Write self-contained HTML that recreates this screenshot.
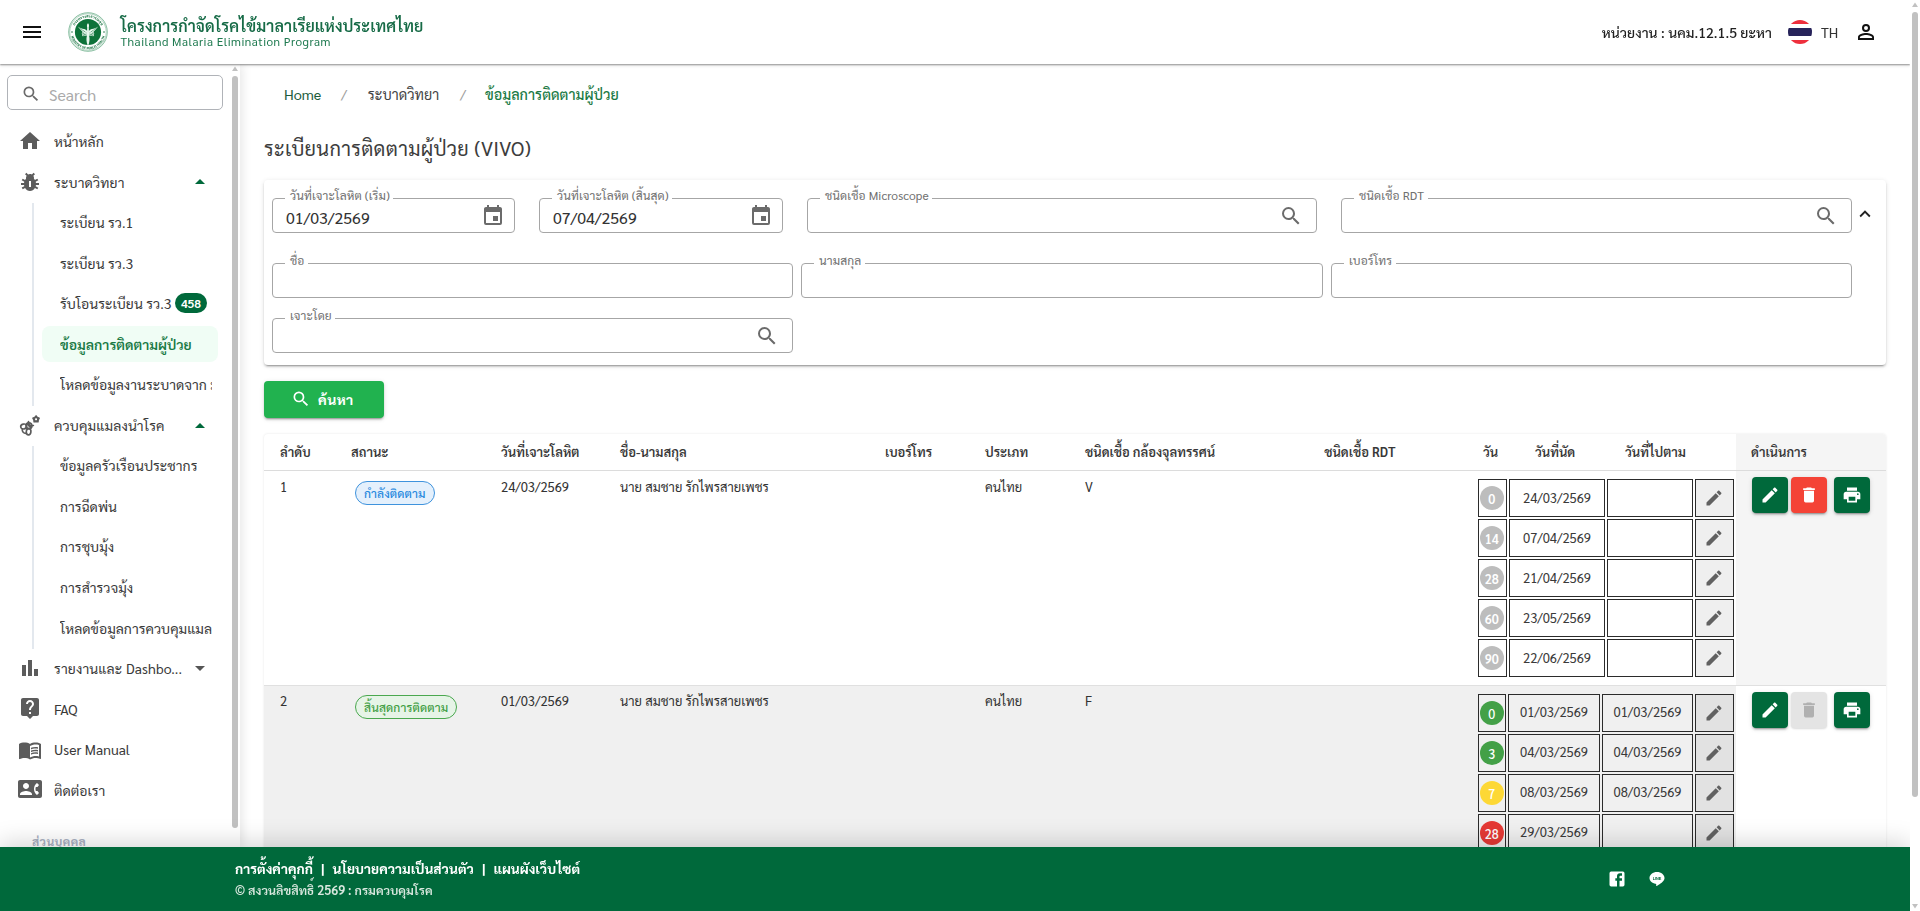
<!DOCTYPE html>
<html lang="th">
<head>
<meta charset="utf-8">
<title>ระเบียนการติดตามผู้ป่วย (VIVO)</title>
<style>
*{box-sizing:border-box;}
html,body{margin:0;padding:0;}
body{width:1920px;height:911px;overflow:hidden;background:#fff;position:relative;
  font-family:"Sarabun","Liberation Sans","Noto Sans Thai","Loma",sans-serif;font-size:14px;color:#333;
  -webkit-font-smoothing:antialiased;}
svg{display:block;}
.abs{position:absolute;}

/* ---------- app bar ---------- */
#appbar{position:absolute;left:0;top:0;width:1910px;height:64px;background:#fff;z-index:30;will-change:transform;
  box-shadow:0 1px 1.5px rgba(0,0,0,.36),0 2px 3px rgba(0,0,0,.10);}
#appbar .burger{position:absolute;left:20px;top:20px;width:24px;height:24px;}
#appbar .logo{position:absolute;left:68px;top:12px;width:40px;height:40px;}
#appbar .t1{position:absolute;left:120.5px;top:13.5px;font-size:16px;letter-spacing:.1px;font-weight:600;color:#176b47;line-height:24px;white-space:nowrap;}
#appbar .t2{position:absolute;left:120.5px;top:32px;font-size:11.8px;letter-spacing:.47px;color:#1f7a50;line-height:18px;white-space:nowrap;}
#appbar .unit{position:absolute;right:138px;top:21px;letter-spacing:.04px;font-size:14px;font-weight:500;color:#222;line-height:22px;white-space:nowrap;}
#appbar .flag{position:absolute;left:1788px;top:20px;width:24px;height:24px;}
#appbar .lang{position:absolute;left:1821px;top:21px;font-size:14px;color:#333;line-height:22px;}
#appbar .user{position:absolute;left:1854px;top:20px;width:24px;height:24px;}

/* ---------- sidebar ---------- */
#side{position:absolute;left:0;top:64px;width:240px;height:783px;background:#fff;z-index:10;overflow:hidden;
  box-shadow:2px 0 10px rgba(0,0,0,.10);}
#side .search{position:absolute;left:7px;top:11px;width:216px;height:35px;border:1px solid #b0b3b8;border-radius:5px;}
#side .search svg{position:absolute;left:13.2px;top:8px;width:20px;height:20px;}
#side .search span{position:absolute;left:41px;top:7px;font-size:16px;color:#aaa;line-height:24px;}
#nav{position:absolute;left:0;top:57px;width:232px;}
.ni{position:relative;height:40.56px;line-height:40.56px;font-size:14px;color:#3a3a3a;white-space:nowrap;}
.ni .ic{position:absolute;left:18px;top:8.3px;width:24px;height:24px;}
.ni .tx{position:absolute;left:54px;top:0;}
.ni.sub .tx{left:60px;max-width:152px;overflow:hidden;}
.ni.grp .tx{letter-spacing:.12px;}
.ni .car{position:absolute;left:188px;top:7.8px;width:24px;height:24px;}
.ni.act .bg{position:absolute;left:42px;top:2.3px;width:176px;height:36px;background:#f0fdf5;border-radius:8px;}
.ni.act .tx{color:#1a7a45;font-weight:600;top:0;}
.badge{display:inline-block;vertical-align:middle;margin-left:4px;margin-top:-5.5px;height:20px;line-height:20.5px;padding:0 5.5px;border-radius:10px;background:#00693b;color:#fff;font-size:12px;font-weight:600;}
.vline{position:absolute;left:32px;width:2px;background:#e3e8ee;}
#side .sect{position:absolute;left:32px;top:768px;font-size:12px;letter-spacing:.4px;font-weight:700;color:#a9b0c2;line-height:18px;}
.sb-thumb{position:absolute;background:#c1c1c1;border-radius:3px;}

/* ---------- main ---------- */
#main{position:absolute;left:240px;top:64px;width:1670px;height:783px;overflow:hidden;background:#fff;}
.crumb{position:absolute;top:18.6px;font-size:14.4px;line-height:22px;white-space:nowrap;}
h1{position:absolute;left:24px;top:69px;margin:0;font-size:20px;letter-spacing:.29px;font-weight:400;color:#3d3d3d;line-height:30px;white-space:nowrap;}
#card{position:absolute;left:24px;top:116px;width:1622px;height:185px;background:#fff;border-radius:4px;
  box-shadow:0 3px 1px -2px rgba(0,0,0,.2),0 2px 2px 0 rgba(0,0,0,.14),0 1px 5px 0 rgba(0,0,0,.12);}
.fld{position:absolute;height:35px;border:1px solid #a6a6a6;border-radius:4px;}
.fld label{position:absolute;left:12px;top:-12.3px;padding:0 3.5px 0 5px;background:#fff;font-size:12px;letter-spacing:.1px;line-height:16px;color:#707070;white-space:nowrap;}
.fld .val{position:absolute;left:13px;top:7px;font-size:16px;line-height:24px;color:#333;}
.fld svg{position:absolute;right:13px;top:5px;width:24px;height:24px;}
#btn{position:absolute;left:24px;top:317px;width:120px;height:37px;letter-spacing:.4px;border-radius:4px;background:#21b24f;color:#fff;font-weight:700;font-size:14px;line-height:36px;
  box-shadow:0 3px 1px -2px rgba(0,0,0,.2),0 2px 2px 0 rgba(0,0,0,.14),0 1px 5px 0 rgba(0,0,0,.12);}
#btn svg{position:absolute;left:27px;top:8px;width:20px;height:20px;}
#btn span{position:absolute;left:54px;top:0;}

/* ---------- table ---------- */
#tbl{position:absolute;left:24px;top:370px;width:1622px;height:420px;border-radius:4px 4px 0 0;box-shadow:0 0 2.5px rgba(0,0,0,.11);}
.th{position:absolute;top:0;height:36px;line-height:36px;font-size:13px;font-weight:600;color:#383838;white-space:nowrap;}
.hline{position:absolute;left:0;width:1622px;height:1px;background:#dcdcdc;}
.td{position:absolute;font-size:13px;line-height:20px;color:#333;white-space:nowrap;}
.chip{position:absolute;height:24px;line-height:22.6px;border-radius:12px;font-size:12px;font-weight:500;letter-spacing:.1px;padding:0 8px;border:1.3px solid;white-space:nowrap;}
.cell{position:absolute;height:38px;border:1px solid #2b2b2b;font-size:13px;line-height:34.4px;text-align:center;color:#3a3a3a;}
.dot{position:absolute;left:.8px;top:6px;width:24px;height:24px;border-radius:50%;color:#fff;font-size:12.5px;font-weight:500;line-height:26px;text-align:center;}
.ab{position:absolute;width:36px;height:36px;border-radius:4px;
  box-shadow:0 3px 1px -2px rgba(0,0,0,.2),0 2px 2px 0 rgba(0,0,0,.14),0 1px 5px 0 rgba(0,0,0,.12);}
.ab svg{position:absolute;left:8px;top:8px;width:20px;height:20px;}

/* ---------- footer ---------- */
#foot{position:absolute;left:0;top:847px;width:1910px;height:64px;background:#00693b;color:#fff;z-index:40;will-change:transform;
  box-shadow:0 -4px 24px rgba(0,0,0,.17);}
#foot .l1 .sp{margin:0 8px;}
#foot .l1{position:absolute;left:235px;top:10px;font-size:13.75px;font-weight:700;line-height:22px;white-space:nowrap;}
#foot .l2{position:absolute;left:235px;top:34px;font-size:12.5px;font-weight:600;line-height:18px;white-space:nowrap;color:#d9e8df;}
</style>
</head>
<body>

<!-- APP BAR -->
<div id="appbar">
  <svg class="burger" viewBox="0 0 24 24"><path fill="#111" d="M3,6H21V8H3V6M3,11H21V13H3V11M3,16H21V18H3V16Z"/></svg>
  <svg class="logo" viewBox="0 0 40 40">
    <defs><path id="arcT" d="M5.5,20 A14.5,14.5 0 0 1 34.5,20"/><path id="arcB" d="M2.7,20 A17.3,17.3 0 0 0 37.3,20"/></defs>
    <circle cx="20" cy="20" r="19.3" fill="#fff" stroke="#3a9463" stroke-width=".6"/>
    <circle cx="20" cy="20" r="18.2" fill="none" stroke="#2a8a55" stroke-width=".35"/>
    <circle cx="20" cy="20" r="13.1" fill="#0d7239"/>
    <text font-size="3.7" font-weight="800" fill="#1b7443" text-anchor="middle" style="font-family:'Sarabun','Liberation Sans',sans-serif"><textPath href="#arcT" startOffset="50%">กระทรวงสาธารณสุข</textPath></text>
    <text font-size="3.3" font-weight="800" fill="#1b7443" text-anchor="middle" letter-spacing="0" style="font-family:'Sarabun','Liberation Sans',sans-serif"><textPath href="#arcB" startOffset="50%">MINISTRY OF PUBLIC HEALTH</textPath></text>
    <circle cx="4" cy="20" r=".8" fill="#1b7443"/><circle cx="36" cy="20" r=".8" fill="#1b7443"/>
    <g fill="#e9f7ee">
      <path d="M20 11.200c1.100 1 1.300 2.600.8 4.100l.3 8.400c.8 2.900.5 6.100-.7 9.600h-.8c-1.200-3.500-1.500-6.700-.7-9.600l.3-8.400c-.5-1.500-.3-3.100.8-4.100z"/>
      <path d="M19.300 21.300L9.700 14.400c2.300 1.500 4.600 2.200 6.300 2.600 1.500.4 2.700 1.200 3.300 2.300z"/>
      <path d="M20.700 21.300l9.600-6.900c-2.300 1.500-4.600 2.200-6.300 2.600-1.500.4-2.700 1.200-3.300 2.300z"/>
      <path d="M9.700 14.400l5.200 5.900c1.300 1.300 3 1.600 4.400 1.400l-.6-1.300c-1.400-.1-2.500-.7-3.300-1.500z"/>
      <path d="M30.300 14.400l-5.200 5.900c-1.300 1.300-3 1.600-4.400 1.400l.6-1.300c1.400-.1 2.500-.7 3.300-1.500z"/>
    </g>
    <path d="M14.800 20.200c-1.300 1.800.3 3.400 2.700 3.100 2.300-.3 3.800-1.500 5.900-1.500 1.700 0 2.600 1.100 1.700 2.400" fill="none" stroke="#e9f7ee" stroke-width="1"/>
    <path d="M25.200 20.200c1.300 1.800-.3 3.400-2.700 3.100-2.300-.3-3.800-1.500-5.900-1.500-1.700 0-2.600 1.100-1.700 2.400" fill="none" stroke="#e9f7ee" stroke-width="1"/>
  </svg>
  <div class="t1">โครงการกำจัดโรคไข้มาลาเรียแห่งประเทศไทย</div>
  <div class="t2">Thailand Malaria Elimination Program</div>
  <div class="unit">หน่วยงาน : นคม.12.1.5 ยะหา</div>
  <svg class="flag" viewBox="0 0 24 24"><defs><clipPath id="fc"><circle cx="12" cy="12" r="12"/></clipPath></defs>
    <g clip-path="url(#fc)"><rect width="24" height="24" fill="#fff"/><rect width="24" height="4" fill="#ee2f3c"/><rect y="20" width="24" height="4" fill="#ee2f3c"/><rect y="8" width="24" height="8" fill="#27235a"/></g></svg>
  <div class="lang">TH</div>
  <svg class="user" viewBox="0 0 24 24"><path fill="#111" d="M12,4A4,4 0 0,1 16,8A4,4 0 0,1 12,12A4,4 0 0,1 8,8A4,4 0 0,1 12,4M12,6A2,2 0 0,0 10,8A2,2 0 0,0 12,10A2,2 0 0,0 14,8A2,2 0 0,0 12,6M12,13C14.67,13 20,14.33 20,17V20H4V17C4,14.33 9.33,13 12,13M12,14.9C9.03,14.9 5.9,16.36 5.9,17V18.1H18.1V17C18.1,16.36 14.97,14.9 12,14.9Z"/></svg>
</div>

<!-- SIDEBAR -->
<div id="side">
  <div class="search">
    <svg viewBox="0 0 24 24"><path fill="#6a6a6a" d="M9.5,3A6.5,6.5 0 0,1 16,9.5C16,11.11 15.41,12.59 14.44,13.73L14.71,14H15.5L20.5,19L19,20.5L14,15.5V14.71L13.73,14.44C12.59,15.41 11.11,16 9.5,16A6.5,6.5 0 0,1 3,9.5A6.5,6.5 0 0,1 9.5,3M9.5,5C7,5 5,7 5,9.5C5,12 7,14 9.5,14C12,14 14,12 14,9.5C14,7 12,5 9.5,5Z"/></svg>
    <span>Search</span>
  </div>
  <div id="nav">
    <div class="ni"><svg class="ic" viewBox="0 0 24 24"><path fill="#5c5c5c" d="M10 20v-6h4v6h5v-8h3L12 3 2 12h3v8z"/></svg><span class="tx">หน้าหลัก</span></div>
    <div class="ni grp"><svg class="ic" viewBox="0 0 24 24"><path fill="#5c5c5c" d="M21 15v-2h-3.070c-.05-.39-.12-.77-.22-1.140l2.580-1.490-1-1.730L16.920 10c-.28-.48-.62-.91-.99-1.290.1-.56.2-1.690-.58-2.890L17 4.180 15.590 2.770l-1.710 1.710c-1.390-.72-2.910-.5-3.760 0L8.410 2.770 7 4.180l1.650 1.650c-.78 1.200-.68 2.340-.58 2.890-.37.38-.71.81-.99 1.290L4.710 8.630l-1 1.730 2.580 1.490c-.1.370-.17.750-.22 1.140H3v2h3.070c.05.39.12.77.22 1.140l-2.580 1.490 1 1.730L7.080 18c1.080 1.810 2.880 3 4.920 3s3.840-1.190 4.920-3l2.370 1.370 1-1.730-2.580-1.490c.1-.37.17-.75.22-1.140H21zm-8 2h-2v-6h2v6z"/></svg><span class="tx">ระบาดวิทยา</span><svg class="car" viewBox="0 0 24 24"><path fill="#00693b" d="M7,15L12,10L17,15H7Z"/></svg></div>
    <div class="ni sub"><span class="tx">ระเบียน รว.1</span></div>
    <div class="ni sub"><span class="tx">ระเบียน รว.3</span></div>
    <div class="ni sub"><span class="tx">รับโอนระเบียน รว.3<span class="badge">458</span></span></div>
    <div class="ni sub act"><div class="bg"></div><span class="tx">ข้อมูลการติดตามผู้ป่วย</span></div>
    <div class="ni sub"><span class="tx">โหลดข้อมูลงานระบาดจาก ม</span></div>
    <div class="ni grp"><svg class="ic" viewBox="0 0 24 24"><path d="M18.05 2.90 L19.37 4.38 L21.19 5.18 L20.19 6.90 L19.99 8.87 L18.05 8.45 L16.11 8.87 L15.91 6.90 L14.91 5.18 L16.73 4.38Z" fill="#5c5c5c" stroke="#5c5c5c" stroke-width="1.5" stroke-linejoin="round"/><rect x="17.10" y="5.30" width="1.9" height="1.9" rx=".4" fill="#fff"/><g transform="translate(0 1.2)" fill="none" stroke="#5c5c5c" stroke-width="1.65" stroke-linecap="round"><circle cx="10.9" cy="11.5" r="2.9"/><path d="M10.500 8.400V7.300M13.900 11.300H15.400M9 9.600L13.100 13.600M9.800 9L13.600 12.700"/><ellipse cx="5.700" cy="12.300" rx="3" ry="2.400" transform="rotate(-12 5.700 12.300)"/><ellipse cx="10.600" cy="17.600" rx="2.300" ry="3.100" transform="rotate(8 10.600 17.600)"/><path d="M4.300 14.700C3.900 17.500 5.600 19.400 8.400 19.200M8.200 13.200L9.300 14.800"/></g></svg><span class="tx">ควบคุมแมลงนำโรค</span><svg class="car" viewBox="0 0 24 24"><path fill="#00693b" d="M7,15L12,10L17,15H7Z"/></svg></div>
    <div class="ni sub"><span class="tx">ข้อมูลครัวเรือนประชากร</span></div>
    <div class="ni sub"><span class="tx">การฉีดพ่น</span></div>
    <div class="ni sub"><span class="tx">การชุบมุ้ง</span></div>
    <div class="ni sub"><span class="tx">การสำรวจมุ้ง</span></div>
    <div class="ni sub"><span class="tx">โหลดข้อมูลการควบคุมแมล</span></div>
    <div class="ni grp"><svg class="ic" viewBox="0 0 24 24"><path fill="#5c5c5c" d="M16 20v-7h4v7zM10 20V4h4v16zM4 20V9h4v11z"/></svg><span class="tx">รายงานและ Dashbo...</span><svg class="car" viewBox="0 0 24 24"><path fill="#555" d="M7,10L12,15L17,10H7Z"/></svg></div>
    <div class="ni"><svg class="ic" style="top:7.3px" viewBox="0 0 24 24"><path fill="#5c5c5c" d="M19 2H5c-1.11 0-2 .9-2 2v14c0 1.1.89 2 2 2h4l3 3 3-3h4c1.1 0 2-.9 2-2V4c0-1.1-.9-2-2-2zm-6 16h-2v-2h2v2zm2.07-7.75l-.9.92C13.45 11.9 13 12.5 13 14h-2v-.5c0-1.1.45-2.1 1.17-2.83l1.24-1.26c.37-.36.59-.86.59-1.41 0-1.1-.9-2-2-2s-2 .9-2 2H8c0-2.21 1.79-4 4-4s4 1.79 4 4c0 .88-.36 1.68-.93 2.25z"/></svg><span class="tx">FAQ</span></div>
    <div class="ni"><svg class="ic" viewBox="0 0 24 24"><path fill="#5c5c5c" d="M21 5c-1.11-.35-2.33-.5-3.5-.5-1.95 0-4.05.4-5.5 1.5-1.45-1.1-3.55-1.500-5.500-1.500S2.450 4.900 1 6v14.650c0 .25.25.5.5.5.1 0 .15-.05.25-.05C3.100 20.450 5.050 20 6.500 20c1.950 0 4.050.4 5.500 1.500 1.350-.85 3.800-1.500 5.500-1.500 1.650 0 3.350.3 4.750 1.050.1.05.15.05.25.05.25 0 .5-.25.5-.5V6c-.6-.45-1.250-.75-2-1zm0 13.500c-1.100-.35-2.300-.5-3.500-.5-1.700 0-4.150.65-5.500 1.500V8c1.350-.85 3.800-1.500 5.500-1.500 1.200 0 2.400.15 3.500.5v11.500z"/><path fill="#5c5c5c" d="M17.500 10.500c.88 0 1.730.09 2.500.26V9.240c-.79-.15-1.640-.24-2.500-.24-1.700 0-3.240.29-4.500.83v1.660c1.130-.64 2.700-.99 4.500-.99zM13 12.490v1.660c1.130-.64 2.700-.99 4.500-.99.88 0 1.730.09 2.500.26V11.900c-.79-.15-1.640-.24-2.500-.24-1.700 0-3.240.3-4.500.83zM17.500 14.330c-1.700 0-3.240.29-4.500.83v1.660c1.130-.64 2.700-.99 4.500-.99.88 0 1.730.09 2.500.26v-1.520c-.79-.16-1.640-.24-2.500-.24z"/></svg><span class="tx">User Manual</span></div>
    <div class="ni"><svg class="ic" style="top:7.3px" viewBox="0 0 24 24"><path fill="#5c5c5c" d="M22 3H2C.9 3 0 3.900 0 5v14c0 1.100.9 2 2 2h20c1.100 0 1.990-.9 1.990-2L24 5c0-1.100-.9-2-2-2zM8 6c1.660 0 3 1.340 3 3s-1.340 3-3 3-3-1.340-3-3 1.340-3 3-3zm6 12H2v-1c0-2 4-3.100 6-3.100s6 1.100 6 3.100v1zm3.850-4h1.640L21 16l-1.990 1.990c-1.310-.98-2.280-2.380-2.730-3.990-.18-.64-.28-1.310-.28-2s.1-1.360.28-2c.45-1.620 1.420-3.010 2.730-3.990L21 8l-1.510 2h-1.640c-.22.63-.35 1.300-.35 2s.13 1.370.35 2z"/></svg><span class="tx">ติดต่อเรา</span></div>
  </div>
  <div class="vline" style="top:139px;height:203px;"></div>
  <div class="vline" style="top:382px;height:203px;"></div>
  <div class="sect">ส่วนบุคคล</div>
  <svg class="abs" style="left:231px;top:1px;width:8px;height:8px;" viewBox="0 0 8 8"><path fill="#c1c1c1" d="M4 1.500L7 6H1z"/></svg>
  <div class="sb-thumb" style="left:232px;top:12px;width:6px;height:752px;"></div>
</div>

<!-- MAIN -->
<div id="main">
  <div class="crumb" style="left:44px;color:#1d5c3c;">Home</div>
  <div class="crumb" style="left:101px;color:#9e9e9e;">/</div>
  <div class="crumb" style="left:127.8px;color:#444;">ระบาดวิทยา</div>
  <div class="crumb" style="left:220px;color:#9e9e9e;">/</div>
  <div class="crumb" style="left:245px;color:#1a7a45;font-weight:500;">ข้อมูลการติดตามผู้ป่วย</div>
  <h1>ระเบียนการติดตามผู้ป่วย (VIVO)</h1>

  <div id="card">
    <div class="fld" style="left:8px;top:18px;width:243px;"><label>วันที่เจาะโลหิต (เริ่ม)</label><span class="val">01/03/2569</span>
      <svg viewBox="0 0 24 24" style="right:9px"><path fill="#6b6b6b" d="M19,19H5V8H19M16,1V3H8V1H6V3H5C3.890,3 3,3.890 3,5V19A2,2 0 0,0 5,21H19A2,2 0 0,0 21,19V5C21,3.890 20.100,3 19,3H18V1M17,12H12V17H17V12Z"/></svg></div>
    <div class="fld" style="left:275px;top:18px;width:244px;"><label>วันที่เจาะโลหิต (สิ้นสุด)</label><span class="val">07/04/2569</span>
      <svg viewBox="0 0 24 24" style="right:9px"><path fill="#6b6b6b" d="M19,19H5V8H19M16,1V3H8V1H6V3H5C3.890,3 3,3.890 3,5V19A2,2 0 0,0 5,21H19A2,2 0 0,0 21,19V5C21,3.890 20.100,3 19,3H18V1M17,12H12V17H17V12Z"/></svg></div>
    <div class="fld" style="left:543px;top:18px;width:510px;"><label>ชนิดเชื้อ Microscope</label>
      <svg viewBox="0 0 24 24"><path fill="#6b6b6b" d="M9.500,3A6.500,6.500 0 0,1 16,9.500C16,11.110 15.410,12.590 14.440,13.730L14.710,14H15.500L20.500,19L19,20.500L14,15.500V14.710L13.730,14.440C12.590,15.410 11.110,16 9.500,16A6.500,6.500 0 0,1 3,9.500A6.500,6.500 0 0,1 9.500,3M9.500,5C7,5 5,7 5,9.500C5,12 7,14 9.500,14C12,14 14,12 14,9.500C14,7 12,5 9.500,5Z"/></svg></div>
    <div class="fld" style="left:1077px;top:18px;width:511px;"><label>ชนิดเชื้อ RDT</label>
      <svg viewBox="0 0 24 24"><path fill="#6b6b6b" d="M9.500,3A6.500,6.500 0 0,1 16,9.500C16,11.110 15.410,12.590 14.440,13.730L14.710,14H15.500L20.500,19L19,20.500L14,15.500V14.710L13.730,14.440C12.590,15.410 11.110,16 9.500,16A6.500,6.500 0 0,1 3,9.500A6.500,6.500 0 0,1 9.500,3M9.500,5C7,5 5,7 5,9.500C5,12 7,14 9.500,14C12,14 14,12 14,9.500C14,7 12,5 9.500,5Z"/></svg></div>
    <svg class="abs" style="left:1590px;top:23px;width:22px;height:22px;" viewBox="0 0 24 24"><path fill="#222" d="M7.410,15.410L12,10.830L16.590,15.410L18,14L12,8L6,14L7.410,15.410Z"/></svg>

    <div class="fld" style="left:8px;top:83px;width:521px;"><label>ชื่อ</label></div>
    <div class="fld" style="left:537px;top:83px;width:522px;"><label>นามสกุล</label></div>
    <div class="fld" style="left:1067px;top:83px;width:521px;"><label>เบอร์โทร</label></div>
    <div class="fld" style="left:8px;top:138px;width:521px;"><label>เจาะโดย</label>
      <svg viewBox="0 0 24 24"><path fill="#6b6b6b" d="M9.500,3A6.500,6.500 0 0,1 16,9.500C16,11.110 15.410,12.590 14.440,13.730L14.710,14H15.500L20.500,19L19,20.500L14,15.500V14.710L13.730,14.440C12.590,15.410 11.110,16 9.500,16A6.500,6.500 0 0,1 3,9.500A6.500,6.500 0 0,1 9.500,3M9.500,5C7,5 5,7 5,9.500C5,12 7,14 9.500,14C12,14 14,12 14,9.500C14,7 12,5 9.500,5Z"/></svg></div>
  </div>

  <div id="btn"><svg viewBox="0 0 24 24"><path fill="#fff" d="M9.500,3A6.500,6.500 0 0,1 16,9.500C16,11.110 15.410,12.590 14.440,13.730L14.710,14H15.500L20.500,19L19,20.500L14,15.500V14.710L13.730,14.440C12.590,15.410 11.110,16 9.500,16A6.500,6.500 0 0,1 3,9.500A6.500,6.500 0 0,1 9.500,3M9.500,5C7,5 5,7 5,9.500C5,12 7,14 9.500,14C12,14 14,12 14,9.500C14,7 12,5 9.500,5Z"/></svg><span>ค้นหา</span></div>

  <div id="tbl">
    <!-- TABLE_CONTENT -->
    <div class="abs" style="left:0;top:252px;width:1622px;height:168px;background:#f0f0f0;"></div>
    <div class="abs" style="left:1472px;top:0;width:150px;height:251px;background:#f5f5f5;border-radius:0 4px 0 0;"></div>
    <div class="abs" style="left:1472px;top:252px;width:150px;height:168px;background:#fff;"></div>
    <div class="th" style="left:16px">ลำดับ</div>
    <div class="th" style="left:87px">สถานะ</div>
    <div class="th" style="left:237px">วันที่เจาะโลหิต</div>
    <div class="th" style="left:356px">ชื่อ-นามสกุล</div>
    <div class="th" style="left:621px">เบอร์โทร</div>
    <div class="th" style="left:721px">ประเภท</div>
    <div class="th" style="left:821px">ชนิดเชื้อ กล้องจุลทรรศน์</div>
    <div class="th" style="left:1060.2px">ชนิดเชื้อ RDT</div>
    <div class="th" style="left:1219px">วัน</div>
    <div class="th" style="left:1271px">วันที่นัด</div>
    <div class="th" style="left:1361px">วันที่ไปตาม</div>
    <div class="th" style="left:1487px">ดำเนินการ</div>
    <div class="hline" style="top:36px"></div>
    <div class="hline" style="top:251px;background:#e0e0e0"></div>
    <div class="td" style="left:16px;top:42.6px">1</div>
    <div class="chip" style="left:91px;top:47px;color:#2688de;border-color:#3f93dd;background:#e4f0fc;">กำลังติดตาม</div>
    <div class="td" style="left:237px;top:42.6px">24/03/2569</div>
    <div class="td" style="left:356px;top:42.6px">นาย สมชาย รักไพรสายเพชร</div>
    <div class="td" style="left:721px;top:42.6px">คนไทย</div>
    <div class="td" style="left:821px;top:42.6px">V</div>
    <div class="td" style="left:16px;top:256.90000000000003px">2</div>
    <div class="chip" style="left:91px;top:261px;color:#3f9e44;border-color:#4aa84f;background:#e6f4e7;">สิ้นสุดการติดตาม</div>
    <div class="td" style="left:237px;top:256.90000000000003px">01/03/2569</div>
    <div class="td" style="left:356px;top:256.90000000000003px">นาย สมชาย รักไพรสายเพชร</div>
    <div class="td" style="left:721px;top:256.90000000000003px">คนไทย</div>
    <div class="td" style="left:821px;top:256.90000000000003px">F</div>
    <div class="cell" style="left:1214px;top:45px;width:29px;background:#fff"><div class="dot" style="background:#bdbdbd;font-weight:600">0</div></div>
    <div class="cell" style="left:1245px;top:45px;width:96px;line-height:36px;background:#fff">24/03/2569</div>
    <div class="cell" style="left:1343px;top:45px;width:86px;line-height:36px;background:#fff"></div>
    <div class="cell" style="left:1431px;top:45px;width:39px;background:#efefef"><svg viewBox="0 0 24 24" style="position:absolute;left:7.7px;top:8px;width:20px;height:20px"><path fill="#616161" d="M20.71,7.04C21.1,6.65 21.1,6 20.71,5.63L18.37,3.29C18,2.9 17.35,2.9 16.96,3.29L15.12,5.12L18.87,8.87M3,17.25V21H6.75L17.81,9.930L14.06,6.180L3,17.25Z"/></svg></div>
    <div class="cell" style="left:1214px;top:85px;width:29px;background:#fff"><div class="dot" style="background:#bdbdbd;font-weight:600">14</div></div>
    <div class="cell" style="left:1245px;top:85px;width:96px;line-height:36px;background:#fff">07/04/2569</div>
    <div class="cell" style="left:1343px;top:85px;width:86px;line-height:36px;background:#fff"></div>
    <div class="cell" style="left:1431px;top:85px;width:39px;background:#efefef"><svg viewBox="0 0 24 24" style="position:absolute;left:7.7px;top:8px;width:20px;height:20px"><path fill="#616161" d="M20.71,7.04C21.1,6.65 21.1,6 20.71,5.63L18.37,3.29C18,2.9 17.35,2.9 16.96,3.29L15.12,5.12L18.87,8.87M3,17.25V21H6.75L17.81,9.930L14.06,6.180L3,17.25Z"/></svg></div>
    <div class="cell" style="left:1214px;top:125px;width:29px;background:#fff"><div class="dot" style="background:#bdbdbd;font-weight:600">28</div></div>
    <div class="cell" style="left:1245px;top:125px;width:96px;line-height:36px;background:#fff">21/04/2569</div>
    <div class="cell" style="left:1343px;top:125px;width:86px;line-height:36px;background:#fff"></div>
    <div class="cell" style="left:1431px;top:125px;width:39px;background:#efefef"><svg viewBox="0 0 24 24" style="position:absolute;left:7.7px;top:8px;width:20px;height:20px"><path fill="#616161" d="M20.71,7.04C21.1,6.65 21.1,6 20.71,5.63L18.37,3.29C18,2.9 17.35,2.9 16.96,3.29L15.12,5.12L18.87,8.87M3,17.25V21H6.75L17.81,9.930L14.06,6.180L3,17.25Z"/></svg></div>
    <div class="cell" style="left:1214px;top:165px;width:29px;background:#fff"><div class="dot" style="background:#bdbdbd;font-weight:600">60</div></div>
    <div class="cell" style="left:1245px;top:165px;width:96px;line-height:36px;background:#fff">23/05/2569</div>
    <div class="cell" style="left:1343px;top:165px;width:86px;line-height:36px;background:#fff"></div>
    <div class="cell" style="left:1431px;top:165px;width:39px;background:#efefef"><svg viewBox="0 0 24 24" style="position:absolute;left:7.7px;top:8px;width:20px;height:20px"><path fill="#616161" d="M20.71,7.04C21.1,6.65 21.1,6 20.71,5.63L18.37,3.29C18,2.9 17.35,2.9 16.96,3.29L15.12,5.12L18.87,8.87M3,17.25V21H6.75L17.81,9.930L14.06,6.180L3,17.25Z"/></svg></div>
    <div class="cell" style="left:1214px;top:205px;width:29px;background:#fff"><div class="dot" style="background:#bdbdbd;font-weight:600">90</div></div>
    <div class="cell" style="left:1245px;top:205px;width:96px;line-height:36px;background:#fff">22/06/2569</div>
    <div class="cell" style="left:1343px;top:205px;width:86px;line-height:36px;background:#fff"></div>
    <div class="cell" style="left:1431px;top:205px;width:39px;background:#efefef"><svg viewBox="0 0 24 24" style="position:absolute;left:7.7px;top:8px;width:20px;height:20px"><path fill="#616161" d="M20.71,7.04C21.1,6.65 21.1,6 20.71,5.63L18.37,3.29C18,2.9 17.35,2.9 16.96,3.29L15.12,5.12L18.87,8.87M3,17.25V21H6.75L17.81,9.930L14.06,6.180L3,17.25Z"/></svg></div>
    <div class="cell" style="left:1214px;top:260px;width:28px;background:transparent"><div class="dot" style="background:#43a047;font-weight:500">0</div></div>
    <div class="cell" style="left:1244px;top:260px;width:92px;line-height:34.4px;background:transparent">01/03/2569</div>
    <div class="cell" style="left:1338px;top:260px;width:91px;line-height:34.4px;background:transparent">01/03/2569</div>
    <div class="cell" style="left:1431px;top:260px;width:39px;background:#e2e2e2"><svg viewBox="0 0 24 24" style="position:absolute;left:7.7px;top:8px;width:20px;height:20px"><path fill="#616161" d="M20.71,7.04C21.1,6.65 21.1,6 20.71,5.63L18.37,3.29C18,2.9 17.35,2.9 16.96,3.29L15.12,5.12L18.87,8.87M3,17.25V21H6.75L17.81,9.930L14.06,6.180L3,17.25Z"/></svg></div>
    <div class="cell" style="left:1214px;top:300px;width:28px;background:transparent"><div class="dot" style="background:#43a047;font-weight:500">3</div></div>
    <div class="cell" style="left:1244px;top:300px;width:92px;line-height:34.4px;background:transparent">04/03/2569</div>
    <div class="cell" style="left:1338px;top:300px;width:91px;line-height:34.4px;background:transparent">04/03/2569</div>
    <div class="cell" style="left:1431px;top:300px;width:39px;background:#e2e2e2"><svg viewBox="0 0 24 24" style="position:absolute;left:7.7px;top:8px;width:20px;height:20px"><path fill="#616161" d="M20.71,7.04C21.1,6.65 21.1,6 20.71,5.63L18.37,3.29C18,2.9 17.35,2.9 16.96,3.29L15.12,5.12L18.87,8.87M3,17.25V21H6.75L17.81,9.930L14.06,6.180L3,17.25Z"/></svg></div>
    <div class="cell" style="left:1214px;top:340px;width:28px;background:transparent"><div class="dot" style="background:#fdd835;font-weight:500">7</div></div>
    <div class="cell" style="left:1244px;top:340px;width:92px;line-height:34.4px;background:transparent">08/03/2569</div>
    <div class="cell" style="left:1338px;top:340px;width:91px;line-height:34.4px;background:transparent">08/03/2569</div>
    <div class="cell" style="left:1431px;top:340px;width:39px;background:#e2e2e2"><svg viewBox="0 0 24 24" style="position:absolute;left:7.7px;top:8px;width:20px;height:20px"><path fill="#616161" d="M20.71,7.04C21.1,6.65 21.1,6 20.71,5.63L18.37,3.29C18,2.9 17.35,2.9 16.96,3.29L15.12,5.12L18.87,8.87M3,17.25V21H6.75L17.81,9.930L14.06,6.180L3,17.25Z"/></svg></div>
    <div class="cell" style="left:1214px;top:380px;width:28px;background:transparent"><div class="dot" style="background:#e53935;font-weight:500">28</div></div>
    <div class="cell" style="left:1244px;top:380px;width:92px;line-height:34.4px;background:transparent">29/03/2569</div>
    <div class="cell" style="left:1338px;top:380px;width:91px;line-height:34.4px;background:transparent"></div>
    <div class="cell" style="left:1431px;top:380px;width:39px;background:#e2e2e2"><svg viewBox="0 0 24 24" style="position:absolute;left:7.7px;top:8px;width:20px;height:20px"><path fill="#616161" d="M20.71,7.04C21.1,6.65 21.1,6 20.71,5.63L18.37,3.29C18,2.9 17.35,2.9 16.96,3.29L15.12,5.12L18.87,8.87M3,17.25V21H6.75L17.81,9.930L14.06,6.180L3,17.25Z"/></svg></div>
    <div class="ab" style="left:1488px;top:43px;background:#00693b"><svg viewBox="0 0 24 24"><path fill="#fff" d="M20.71,7.04C21.1,6.65 21.1,6 20.71,5.63L18.37,3.29C18,2.9 17.35,2.9 16.96,3.29L15.12,5.12L18.87,8.87M3,17.25V21H6.75L17.81,9.930L14.06,6.180L3,17.25Z"/></svg></div>
    <div class="ab" style="left:1527px;top:43px;background:#f44336"><svg viewBox="0 0 24 24"><path fill="#fff" d="M19,4H15.5L14.5,3H9.5L8.5,4H5V6H19M6,19A2,2 0 0,0 8,21H16A2,2 0 0,0 18,19V7H6V19Z"/></svg></div>
    <div class="ab" style="left:1570px;top:43px;background:#00693b"><svg viewBox="0 0 24 24"><path fill="#fff" d="M18,3H6V7H18M19,12A1,1 0 0,1 18,11A1,1 0 0,1 19,10A1,1 0 0,1 20,11A1,1 0 0,1 19,12M16,19H8V14H16M19,8H5A3,3 0 0,0 2,11V17H6V21H18V17H22V11A3,3 0 0,0 19,8Z"/></svg></div>
    <div class="ab" style="left:1488px;top:258px;background:#00693b"><svg viewBox="0 0 24 24"><path fill="#fff" d="M20.71,7.04C21.1,6.65 21.1,6 20.71,5.63L18.37,3.29C18,2.9 17.35,2.9 16.96,3.29L15.12,5.12L18.87,8.87M3,17.25V21H6.75L17.81,9.930L14.06,6.180L3,17.25Z"/></svg></div>
    <div class="ab" style="left:1527px;top:258px;background:#e4e4e4;box-shadow:0 1px 2px rgba(0,0,0,.15)"><svg viewBox="0 0 24 24"><path fill="#b0b0b0" d="M19,4H15.5L14.5,3H9.5L8.5,4H5V6H19M6,19A2,2 0 0,0 8,21H16A2,2 0 0,0 18,19V7H6V19Z"/></svg></div>
    <div class="ab" style="left:1570px;top:258px;background:#00693b"><svg viewBox="0 0 24 24"><path fill="#fff" d="M18,3H6V7H18M19,12A1,1 0 0,1 18,11A1,1 0 0,1 19,10A1,1 0 0,1 20,11A1,1 0 0,1 19,12M16,19H8V14H16M19,8H5A3,3 0 0,0 2,11V17H6V21H18V17H22V11A3,3 0 0,0 19,8Z"/></svg></div>
    <!-- /TABLE_CONTENT -->
  </div>
</div>

<!-- page scrollbar -->
<div class="abs" style="left:1910px;top:0;width:10px;height:911px;background:#fff;z-index:45"></div>
<svg class="abs" style="left:1911px;top:1px;width:8px;height:8px;z-index:50" viewBox="0 0 8 8"><path fill="#c1c1c1" d="M4 1.500L7 6H1z"/></svg>
<div class="sb-thumb" style="left:1912px;top:12px;width:6px;height:785px;z-index:50"></div>
<svg class="abs" style="left:1911px;top:902px;width:8px;height:8px;z-index:50" viewBox="0 0 8 8"><path fill="#c1c1c1" d="M4 6.500L7 2H1z"/></svg>

<!-- FOOTER -->
<div id="foot">
  <div class="l1">การตั้งค่าคุกกี้<span class="sp">|</span>นโยบายความเป็นส่วนตัว<span class="sp">|</span>แผนผังเว็บไซต์</div>
  <div class="l2">© สงวนลิขสิทธิ์ 2569 : กรมควบคุมโรค</div>
  <svg class="abs" style="left:1607px;top:22px;width:20px;height:20px;" viewBox="0 0 24 24"><path fill="#fff" d="M5,3H19A2,2 0 0,1 21,5V19A2,2 0 0,1 19,21H5A2,2 0 0,1 3,19V5A2,2 0 0,1 5,3M18,5H15.500A3.500,3.500 0 0,0 12,8.500V11H10V14H12V21H15V14H18V11H15V9A1,1 0 0,1 16,8H18V5Z"/></svg>
  <svg class="abs" style="left:1647px;top:22px;width:20px;height:20px;" viewBox="0 0 24 24"><path fill="#fff" d="M12 3.500c-5 0-9 3.200-9 7.200 0 3.500 3.100 6.400 7.300 7 .3.100.7.200.8.500.1.300 0 .7 0 .9l-.1.800c0 .2-.2.900.8.500s5.300-3.100 7.200-5.300c1.300-1.400 2-2.900 2-4.400 0-4-4-7.200-9-7.200z"/><text x="12" y="12.600" font-size="4.600" font-weight="700" fill="#00693b" text-anchor="middle" style="font-family:'Liberation Sans',sans-serif">LINE</text></svg>
</div>
</body>
</html>
